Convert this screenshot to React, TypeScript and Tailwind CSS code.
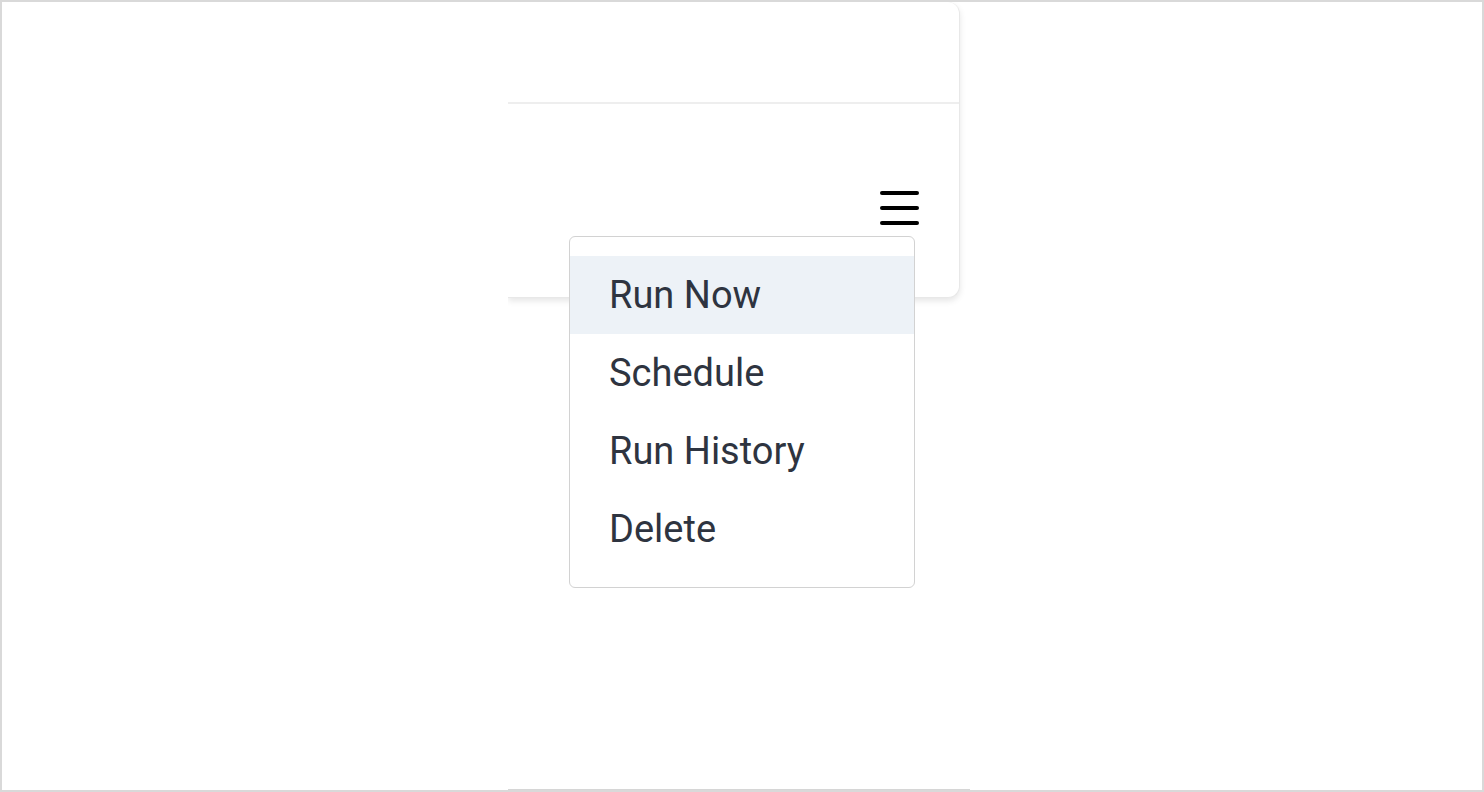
const items = ["Run Now", "Schedule", "Run History", "Delete"];

const MenuIcon = () => (
  <div className="flex flex-col gap-[11px] w-[39px]">
    <span className="block h-[4px] rounded-full bg-black" />
    <span className="block h-[4px] rounded-full bg-black" />
    <span className="block h-[4px] rounded-full bg-black" />
  </div>
);

const App = () => (
  <div
    className="relative w-[1484px] h-[792px] overflow-hidden bg-white border-2 border-[#d9d9d9]"
    style={{ fontFamily: "Roboto, 'Noto Sans', sans-serif" }}
  >
    {/* Card (clipped on the left) */}
    <div className="ml-[506px] w-[470px] h-[312px] overflow-hidden">
      <div className="w-[452px] h-[296px] bg-white rounded-r-[12px] border border-l-0 border-t-0 border-[#e8e8e8] shadow-[0_3px_6px_rgba(0,0,0,0.1)] flex flex-col">
        <div className="h-[102px] border-b-2 border-[#eeeeee]" />
        <div className="flex-1 flex justify-end pr-[40px] pt-[87px]">
          <MenuIcon />
        </div>
      </div>
    </div>

    {/* Dropdown menu */}
    <div className="absolute left-[567px] top-[234px] w-[346px] bg-white border border-[#d2d2d2] rounded-[6px] py-[19px]">
      {items.map((label, i) => (
        <div
          key={label}
          className={`h-[78px] flex items-center pl-[39px] text-[38px] text-[#2e3440] ${i === 0 ? "bg-[#edf2f7]" : ""}`}
        >
          {label}
        </div>
      ))}
    </div>

    <div className="absolute bottom-[-2px] left-[506px] w-[462px] h-[3px] bg-[#d6d6d6]" />
  </div>
);

export default App;
